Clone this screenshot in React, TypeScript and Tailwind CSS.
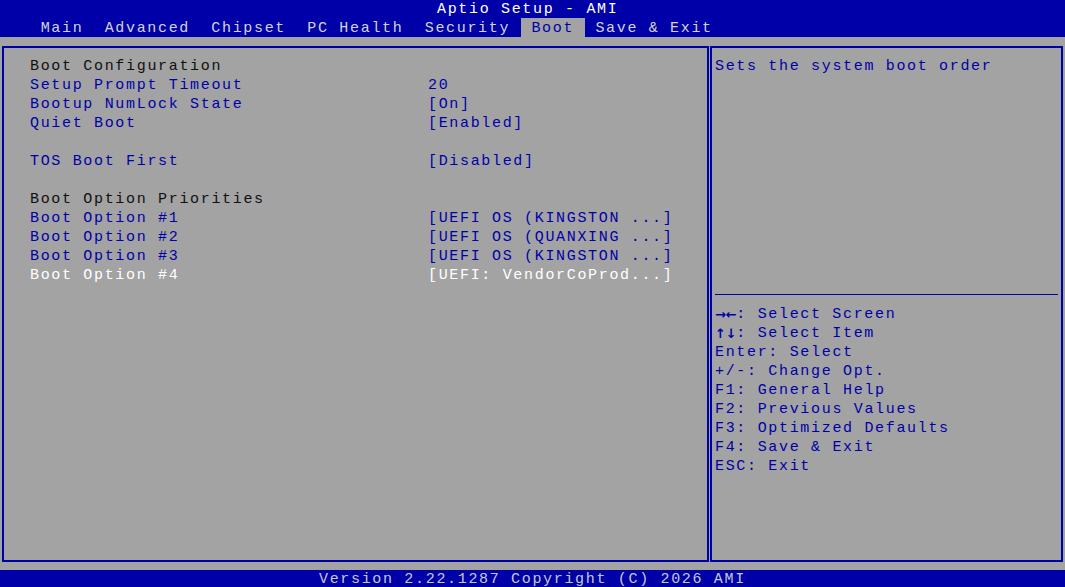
import React from 'react';

const BLUE = 'text-[#0000a8]';

type Row =
  | { kind: 'title'; label: string }
  | { kind: 'blank' }
  | { kind: 'item'; label: string; value: string; selected?: boolean };

const rows: Row[] = [
  { kind: 'title', label: 'Boot Configuration' },
  { kind: 'item', label: 'Setup Prompt Timeout', value: '20' },
  { kind: 'item', label: 'Bootup NumLock State', value: '[On]' },
  { kind: 'item', label: 'Quiet Boot', value: '[Enabled]' },
  { kind: 'blank' },
  { kind: 'item', label: 'TOS Boot First', value: '[Disabled]' },
  { kind: 'blank' },
  { kind: 'title', label: 'Boot Option Priorities' },
  { kind: 'item', label: 'Boot Option #1', value: '[UEFI OS (KINGSTON ...]' },
  { kind: 'item', label: 'Boot Option #2', value: '[UEFI OS (QUANXING ...]' },
  { kind: 'item', label: 'Boot Option #3', value: '[UEFI OS (KINGSTON ...]' },
  { kind: 'item', label: 'Boot Option #4', value: '[UEFI: VendorCoProd...]', selected: true },
];

const tabs = ['Main', 'Advanced', 'Chipset', 'PC Health', 'Security', 'Boot', 'Save & Exit'];

const help: [string, string][] = [
  ['→←', ': Select Screen'],
  ['↑↓', ': Select Item'],
  ['', 'Enter: Select'],
  ['', '+/-: Change Opt.'],
  ['', 'F1: General Help'],
  ['', 'F2: Previous Values'],
  ['', 'F3: Optimized Defaults'],
  ['', 'F4: Save & Exit'],
  ['', 'ESC: Exit'],
];

export default function App() {
  return (
    <div className="w-[1065px] h-[587px] bg-[#a3a3a3] flex flex-col overflow-hidden font-['Liberation_Mono','DejaVu_Sans_Mono',monospace] text-[15px] leading-[19px] tracking-[1.67px] whitespace-pre">
      {/* header */}
      <div className="bg-[#0000a8] h-[37px] flex flex-col shrink-0">
        <div className="h-[18px] leading-[17px] pt-[1px] text-white pl-[437px]">Aptio Setup - AMI</div>
        <div className="h-[19px] flex pl-[30px]">
          {tabs.map((t) => (
            <div
              key={t}
              className={
                t === 'Boot'
                  ? 'h-[19px] px-[10.67px] bg-[#a3a3a3] text-[#0000a8] leading-[17px] pt-[2px]'
                  : 'h-[19px] px-[10.67px] text-[#d4d4d4] leading-[17px] pt-[2px]'
              }
            >
              {t}
            </div>
          ))}
        </div>
      </div>

      {/* body */}
      <div className="flex-1 flex pt-[9px] pb-[8px] pl-[2px] pr-[2px] gap-[1px]">
        <div className="w-[707px] border-2 border-[#0000a8] pl-[26px] pt-[9px]">
          {rows.map((r, i) => {
            if (r.kind === 'blank') return <div key={i} className="h-[19px]" />;
            if (r.kind === 'title')
              return (
                <div key={i} className="h-[19px] text-[#101010]">
                  {r.label}
                </div>
              );
            return (
              <div key={i} className={`h-[19px] flex ${r.selected ? 'text-white' : BLUE}`}>
                <span className="w-[398px]">{r.label}</span>
                <span>{r.value}</span>
              </div>
            );
          })}
        </div>

        <div className="flex-1 border-2 border-[#0000a8] pt-[9px] flex flex-col">
          <div className={`h-[228px] pl-[3px] ${BLUE}`}>Sets the system boot order</div>
          <div className="h-[19px] flex items-center px-[3px]">
            <div className="h-[1.5px] w-full bg-[#0000a8]" />
          </div>
          <div className={`pl-[3px] pt-[1px] ${BLUE}`}>
            {help.map(([a, h]) => (
              <div key={h} className="h-[19px] flex">
                {a && (
                  <span className="font-['DejaVu_Sans',sans-serif] font-bold text-[13px] tracking-[0px] w-[21.3px] flex">
                    <span className="w-[10.67px]">{a[0]}</span>
                    <span className="w-[10.67px]">{a[1]}</span>
                  </span>
                )}
                <span>{h}</span>
              </div>
            ))}
          </div>
        </div>
      </div>

      {/* footer */}
      <div className="bg-[#0000a8] h-[17px] leading-[15px] pt-[2px] text-[#c8c8c8] pl-[319px] shrink-0">
        Version 2.22.1287 Copyright (C) 2026 AMI
      </div>
    </div>
  );
}
